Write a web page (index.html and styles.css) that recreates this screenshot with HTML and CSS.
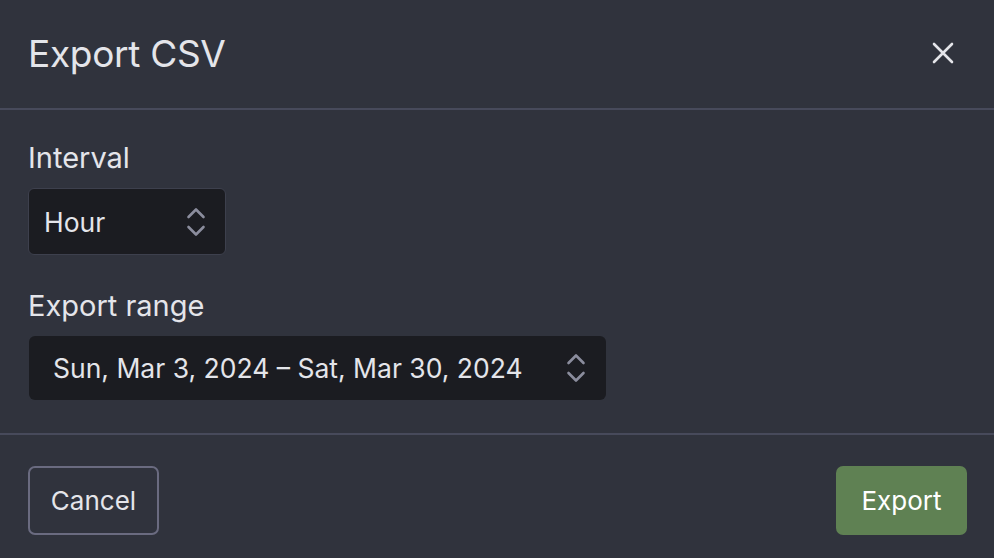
FILE: index.html
```html
<!DOCTYPE html>
<html lang="en">
<head>
  <meta charset="UTF-8" />
  <meta name="viewport" content="width=device-width, initial-scale=1.0"/>
  <title>Export CSV</title>
  <link rel="stylesheet" href="styles.css">
</head>
<body>
  <div class="modal">
    <div class="modal-header">
      <h1>Export CSV</h1>
      <button class="close" aria-label="Close">
        <svg width="22" height="22" viewBox="0 0 22 22"><path d="M2 2 L20 20 M20 2 L2 20" stroke="#e4e5ea" stroke-width="2.6" stroke-linecap="round"/></svg>
      </button>
    </div>

    <div class="modal-body">
      <div class="field">
        <label>Interval</label>
        <div class="select select-small">
          <span>Hour</span>
          <svg class="chev" width="20" height="32" viewBox="0 0 20 32"><path d="M2.5 11 L10 3.5 L17.5 11 M2.5 21 L10 28.5 L17.5 21" fill="none" stroke="#8b8d9d" stroke-width="2.6" stroke-linecap="round" stroke-linejoin="round"/></svg>
        </div>
      </div>

      <div class="field">
        <label>Export range</label>
        <div class="select select-wide">
          <span>Sun, Mar 3, 2024 – Sat, Mar 30, 2024</span>
          <svg class="chev" width="20" height="32" viewBox="0 0 20 32"><path d="M2.5 11 L10 3.5 L17.5 11 M2.5 21 L10 28.5 L17.5 21" fill="none" stroke="#8b8d9d" stroke-width="2.6" stroke-linecap="round" stroke-linejoin="round"/></svg>
        </div>
      </div>
    </div>

    <div class="modal-footer">
      <button class="btn btn-cancel">Cancel</button>
      <button class="btn btn-export">Export</button>
    </div>
  </div>
</body>
</html>
```

FILE: styles.css
```css
body {
  margin: 0;
  background-color: #30333d;
  color: #e4e5ea;
  font-family: "Inter", "Noto Sans", sans-serif;
}

.modal {
  width: 994px;
  height: 558px;
  display: flex;
  flex-direction: column;
}

.modal-header {
  height: 110px;
  display: flex;
  align-items: center;
  justify-content: space-between;
  padding: 0 40px 2px 28px;
  border-bottom: 2px solid #474a5b;
  box-sizing: border-box;
}

.modal-header h1 {
  margin: 0;
  font-size: 37px;
  font-weight: 400;
  letter-spacing: -0.3px;
}

.close {
  background: none;
  border: none;
  padding: 0;
  display: flex;
  cursor: pointer;
}

.modal-body {
  height: 325px;
  padding: 29px 28px 0;
  border-bottom: 2px solid #474a5b;
  box-sizing: border-box;
}

.field label {
  display: block;
  font-size: 29px;
  line-height: 38px;
  margin-bottom: 11px;
}

.field + .field {
  margin-top: 32px;
}

.select {
  display: flex;
  align-items: center;
  justify-content: space-between;
  background-color: #1b1c21;
  border-radius: 6px;
  box-sizing: border-box;
  font-size: 26.5px;
}

.select-small {
  width: 198px;
  height: 67px;
  border: 1px solid #3d404d;
  padding: 0 19px 0 15px;
}

.select-wide {
  width: 577px;
  height: 64px;
  margin-left: 1px;
  padding: 0 20px 0 24px;
}

.modal-footer {
  flex: 1;
  display: flex;
  align-items: center;
  justify-content: space-between;
  padding: 8px 27px 0 28px;
}

.btn {
  font-family: inherit;
  font-size: 26px;
  height: 69px;
  width: 131px;
  border-radius: 7px;
  color: #e4e5ea;
  cursor: pointer;
}

.btn-cancel {
  background: none;
  border: 2px solid #6a6b80;
}

.btn-export {
  background-color: #5f8153;
  border: none;
  color: #fff;
}
```
